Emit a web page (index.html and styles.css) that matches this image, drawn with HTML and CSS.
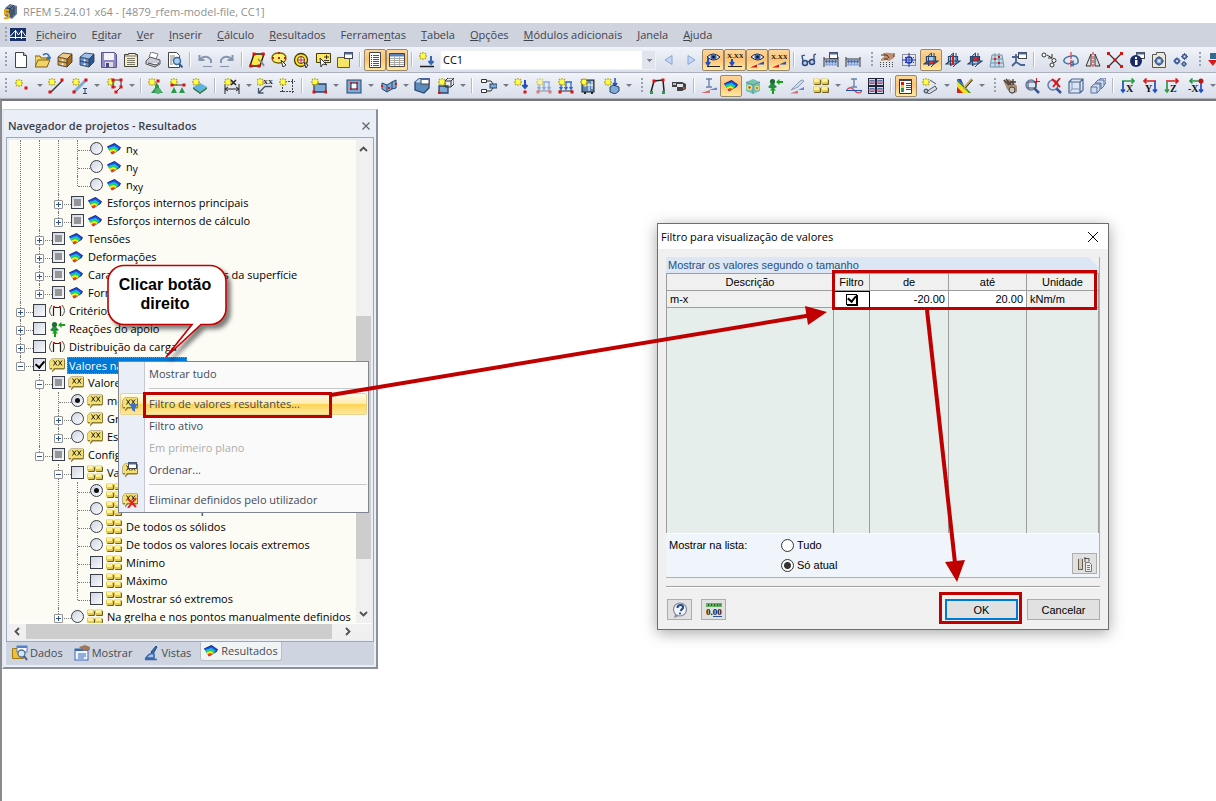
FILE: index.html
```html
<!DOCTYPE html>
<html lang="pt">
<head>
<meta charset="utf-8">
<title>RFEM 5.24.01 x64 - [4879_rfem-model-file, CC1]</title>
<link rel="stylesheet" href="styles.css">
</head>
<body>
<header class="titlebar"><svg data-icon="app"></svg><span>RFEM 5.24.01 x64 - [4879_rfem-model-file, CC1]</span></header>
<nav class="menubar">
  <i class="grip"></i><svg data-icon="bridge"></svg>
  <a href="#"><u>F</u>icheiro</a><a href="#">E<u>d</u>itar</a><a href="#"><u>V</u>er</a><a href="#"><u>I</u>nserir</a><a href="#"><u>C</u>álculo</a><a href="#"><u>R</u>esultados</a><a href="#">Ferrame<u>n</u>tas</a><a href="#"><u>T</u>abela</a><a href="#"><u>O</u>pções</a><a href="#"><u>M</u>ódulos adicionais</a><a href="#"><u>J</u>anela</a><a href="#"><u>A</u>juda</a>
</nav>
<div class="toolbar">
  <span class="tools" data-tools="grip new open cabinet cabinetblue save notebook print preview | undo redo | quad lasso target selectbox window | *list *grid | starload"></span>
  <select class="case" aria-label="Caso de carga"><option>CC1</option></select>
  <span class="tools" data-tools="prev next *eyeload *xxload *eyeres *xxres | glasses abacuswin abacus end hand snap *planexy planexz planeyz guide axes | copy rotate mirror scale info settings gears end flag"></span>
</div>
<div class="toolbar">
  <span class="tools" data-tools="grip node+ line member+ poly+ | nodesup linesup surfsup | dim+ comment region | surface+ opening+ plates+ solid cubes+ | connect+ pload mload1 mload lload sload+ end frame camera | diag *rainbow cube3d support strips tiles+ curve sections | *panel wizard+ colors+ end pan zoomin zoomout box boxes | viewx viewy viewz viewmx+"></span>
</div>
<main class="workspace">
  <section class="navigator" aria-label="Navegador de projetos">
    <header><h2>Navegador de projetos - Resultados</h2><button class="close" aria-label="Fechar"><svg viewBox="0 0 8 8"><path d="M.5.5l7 7m0-7l-7 7"/></svg></button></header>
    <div class="frame">
      <div class="treebox">
        <ul class="tree">
          <li><ul><li><ul><li><ul>
            <li><label class="row"><b></b><input type="radio" name="n"><svg data-icon="rainbow"></svg><span>n<sub>x</sub></span></label></li>
            <li><label class="row"><b></b><input type="radio" name="n"><svg data-icon="rainbow"></svg><span>n<sub>y</sub></span></label></li>
            <li><label class="row"><b></b><input type="radio" name="n"><svg data-icon="rainbow"></svg><span>n<sub>xy</sub></span></label></li>
          </ul></li>
            <li><label class="row"><b class="plus"></b><input type="checkbox" class="mixed"><svg data-icon="rainbow"></svg><span>Esforços internos principais</span></label></li>
            <li><label class="row"><b class="plus"></b><input type="checkbox" class="mixed"><svg data-icon="rainbow"></svg><span>Esforços internos de cálculo</span></label></li>
          </ul></li>
            <li><label class="row"><b class="plus"></b><input type="checkbox" class="mixed"><svg data-icon="rainbow"></svg><span>Tensões</span></label></li>
            <li><label class="row"><b class="plus"></b><input type="checkbox" class="mixed"><svg data-icon="rainbow"></svg><span>Deformações</span></label></li>
            <li><label class="row"><b class="plus"></b><input type="checkbox" class="mixed"><svg data-icon="rainbow"></svg><span>Características geométricas da superfície</span></label></li>
            <li><label class="row"><b class="plus"></b><input type="checkbox" class="mixed"><svg data-icon="rainbow"></svg><span>Formas</span></label></li>
          </ul></li>
          <li><label class="row"><b class="plus"></b><input type="checkbox"><svg data-icon="criteria"></svg><span>Critérios</span></label></li>
          <li><label class="row"><b class="plus"></b><input type="checkbox"><svg data-icon="support"></svg><span>Reações do apoio</span></label></li>
          <li><label class="row"><b class="plus"></b><input type="checkbox"><svg data-icon="criteria"></svg><span>Distribuição da carga</span></label></li>
          <li><label class="row selected"><b class="minus"></b><input type="checkbox" checked><svg data-icon="xx"></svg><span>Valores nas superfícies</span></label>
            <ul>
              <li><label class="row"><b class="minus"></b><input type="checkbox" class="mixed"><svg data-icon="xx"></svg><span>Valores</span></label>
                <ul>
                  <li><label class="row"><b></b><input type="radio" name="v" checked><svg data-icon="xx"></svg><span>m-x</span></label></li>
                  <li><label class="row"><b class="plus"></b><input type="radio" name="v"><svg data-icon="xx"></svg><span>Grupos</span></label></li>
                  <li><label class="row"><b class="plus"></b><input type="radio" name="v"><svg data-icon="xx"></svg><span>Específico</span></label></li>
                </ul></li>
              <li><label class="row"><b class="minus"></b><input type="checkbox" class="mixed"><svg data-icon="xx"></svg><span>Configurações</span></label>
                <ul>
                  <li><label class="row"><b class="minus"></b><input type="checkbox"><svg data-icon="tiles"></svg><span>Valores</span></label>
                    <ul>
                      <li><label class="row"><b></b><input type="radio" name="e" checked><svg data-icon="tiles"></svg><span>Extremos</span></label></li>
                      <li><label class="row"><b></b><input type="radio" name="e"><svg data-icon="tiles"></svg><span>De todas as superfícies</span></label></li>
                      <li><label class="row"><b></b><input type="radio" name="e"><svg data-icon="tiles"></svg><span>De todos os sólidos</span></label></li>
                      <li><label class="row"><b></b><input type="radio" name="e"><svg data-icon="tiles"></svg><span>De todos os valores locais extremos</span></label></li>
                      <li><label class="row"><b></b><input type="checkbox"><svg data-icon="tiles"></svg><span>Mínimo</span></label></li>
                      <li><label class="row"><b></b><input type="checkbox"><svg data-icon="tiles"></svg><span>Máximo</span></label></li>
                      <li><label class="row"><b></b><input type="checkbox"><svg data-icon="tiles"></svg><span>Mostrar só extremos</span></label></li>
                    </ul></li>
                  <li><label class="row"><b class="plus"></b><input type="radio" name="g"><svg data-icon="tiles"></svg><span>Na grelha e nos pontos manualmente definidos</span></label></li>
                </ul></li>
            </ul></li>
        </ul>
      </div>
      <div class="vscroll"><svg viewBox="0 0 9 6"><path d="M1 5l3.500-3.500L8 5"/></svg><i></i><svg viewBox="0 0 9 6"><path d="M1 1l3.500 3.500L8 1"/></svg></div>
      <div class="hscroll"><svg viewBox="0 0 6 9"><path d="M5 1L1.500 4.500 5 8"/></svg><i></i><svg viewBox="0 0 6 9"><path d="M1 1l3.500 3.500L1 8"/></svg></div>
    </div>
    <nav class="tabs">
      <button><svg data-icon="data"></svg>Dados</button><button><svg data-icon="display"></svg>Mostrar</button><button><svg data-icon="views"></svg>Vistas</button><button class="current"><svg data-icon="rainbow"></svg>Resultados</button>
    </nav>
  </section>
</main>

<menu class="context">
  <li><button>Mostrar tudo</button></li>
  <li class="rule"></li>
  <li><button class="hot"><svg data-icon="xxfilter"></svg>Filtro de valores resultantes...</button></li>
  <li><button>Filtro ativo</button></li>
  <li><button disabled>Em primeiro plano</button></li>
  <li><button><svg data-icon="xxsort"></svg>Ordenar...</button></li>
  <li class="rule"></li>
  <li><button><svg data-icon="xxdelete"></svg>Eliminar definidos pelo utilizador</button></li>
</menu>

<section class="dialog" role="dialog" aria-labelledby="dlg">
  <header><h2 id="dlg">Filtro para visualização de valores</h2><button class="close" aria-label="Fechar"><svg viewBox="0 0 10 10"><path d="M0 0l10 10m0-10L0 10"/></svg></button></header>
  <div class="body">
    <fieldset>
      <legend>Mostrar os valores segundo o tamanho</legend>
      <table>
        <colgroup><col><col class="c2"><col class="c3"><col class="c4"><col class="c5"></colgroup>
        <thead><tr><th>Descrição</th><th>Filtro</th><th>de</th><th>até</th><th>Unidade</th></tr></thead>
        <tbody>
          <tr class="data"><td class="fixed">m-x</td><td class="focus"><input type="checkbox" checked aria-label="Filtro"></td><td class="num">-20.00</td><td class="num">20.00</td><td class="fixed">kNm/m</td></tr>
          <tr class="rest"><td></td><td></td><td></td><td></td><td></td></tr>
        </tbody>
      </table>
      <div class="options">
        <span class="caption">Mostrar na lista:</span>
        <div class="radios"><label><input type="radio" name="lista">Tudo</label><label><input type="radio" name="lista" checked>Só atual</label></div>
        <button class="small" aria-label="Copiar"><svg data-icon="copydb"></svg></button>
      </div>
    </fieldset>
    <footer>
      <button class="small" aria-label="Ajuda"><svg data-icon="help"></svg></button>
      <button class="small" aria-label="Unidades"><svg data-icon="units"></svg></button>
      <button class="wide ok">OK</button>
      <button class="wide">Cancelar</button>
    </footer>
  </div>
</section>

<svg class="notes" width="1216" height="801" aria-hidden="true">
  <defs><filter id="sh" x="-20%" y="-20%" width="150%" height="150%"><feDropShadow dx="4" dy="4" stdDeviation="2" flood-color="#000" flood-opacity=".5"/></filter></defs>
  <path filter="url(#sh)" d="M124 265.500H210A16 16 0 0 1 226 281.500V308.500A16 16 0 0 1 210 324.500H201L166 357 192 324.500H124A16 16 0 0 1 108 308.500V281.500A16 16 0 0 1 124 265.500Z" fill="#fff" stroke="#c00000" stroke-width="1.600"/>
  <g fill="none" stroke="#c00000" stroke-width="3"><rect x="144.500" y="393.500" width="186" height="23"/><rect x="833.500" y="271.500" width="262" height="37"/><rect x="940.500" y="593.500" width="80" height="29"/></g>
  <g fill="none" stroke="#c00000" stroke-width="4"><path d="M331 395L809 315.500"/><path d="M927 310L955 563"/></g>
  <g fill="#c00000"><path d="M827 312L805 306 808 325Z"/><path d="M957 582L945 562 965 560Z"/></g>
</svg>
<p class="callout">Clicar botão direito</p>
<script src="icons.js"></script>
</body>
</html>
```
FILE: styles.css
```css
* { box-sizing: border-box; }
body { margin: 0; min-height: 100vh; display: flex; flex-direction: column; overflow: hidden; background: #fff; color: #000; font: 11px/18px "Open Sans", "Noto Sans", sans-serif; }
button { font: inherit; color: inherit; padding: 0; margin: 0; border: 0; background: none; }
h2 { margin: 0; font: inherit; }
ul, menu { list-style: none; margin: 0; padding: 0; }
svg { flex: none; }
svg[data-icon] { width: 16px; height: 16px; }

.titlebar { height: 23px; display: flex; align-items: center; gap: 5px; padding-left: 2px; color: #8f8f8f; }
.menubar { height: 24px; display: flex; align-items: center; gap: 15px; background: #cfd3dd; padding-left: 5px; }
.menubar svg { margin-left: -12px; margin-right: -5px; }
.menubar a { color: #3e4350; text-decoration: none; white-space: nowrap; }
.grip { flex: none; width: 2px; height: 16px; background: repeating-linear-gradient(#9aa0ae 0 2px, transparent 2px 4px); }

.toolbar { height: 26px; display: flex; align-items: center; background: linear-gradient(#f1f4f9, #e4e8f1 50%, #d9deea); border-bottom: 1px solid #aeb2bd; overflow: hidden; }
.tools { display: flex; align-items: center; flex: none; }
.toolbar .grip { margin: 0 3px 0 5px; }
.tools .grip.end { margin-left: 7px; }
.tool { width: 22px; height: 22px; display: flex; align-items: center; justify-content: center; flex: none; }
.tool.split { width: 35px; padding-left: 5px; justify-content: flex-start; }
.tool.split::after { content: ""; margin-left: 6px; border: 3px solid transparent; border-top: 3px solid #777b85; border-bottom: 0; }
.tool.on { background: linear-gradient(#fbd69c, #fdc274 45%, #fee9a0); border: 1px solid #98896c; border-radius: 2px; }
.bar { width: 2px; height: 15px; margin: 0 3px; background: #b4b8c2; border-right: 1px solid #fff; flex: none; }
.case { appearance: none; width: 216px; height: 20px; margin: 0 2px; flex: none; border-radius: 0; padding: 0 2px; font: inherit; color: #000; background: linear-gradient(#7d818c, #7d818c) 206px 8px / 5px 1px no-repeat, linear-gradient(#7d818c, #7d818c) 207px 9px / 3px 1px no-repeat, linear-gradient(#7d818c, #7d818c) 208px 10px / 1px 1px no-repeat, linear-gradient(90deg, #fff 201px, #e0e4ec 201px); border: 1px solid #eef0f5; }

.workspace { flex: 1; border-top: 2px solid #77797e; border-left: 2px solid #8a8c91; padding-top: 8px; }
.navigator { width: 376px; background: #e9eef7; border: 2px solid #8c909a; border-left-color: #e4e8ef; border-top: 1px solid #c9ced8; padding: 0 2px 2px; }
.navigator > header { height: 27px; display: flex; align-items: center; justify-content: space-between; padding: 5px 4px 0 2px; color: #3b3f4b; font-weight: 600; }
.close svg { display: block; width: 8px; height: 8px; fill: none; stroke: #666; stroke-width: 1.300; }
.frame { border: 1px solid #a0a6b4; padding: 2px; display: grid; grid-template: 483px 16px / 1fr 15px; background: #e9eef7; }
.treebox { overflow: hidden; background: #fcfbf4; }
.tree { padding-left: 2px; }
.tree ul { margin-left: 19px; }
.tree li { position: relative; }
.tree li::before { content: ""; position: absolute; left: 9px; top: 0; bottom: 0; border-left: 1px dotted #777; }
.tree li:last-child::before { bottom: auto; height: 10px; }
.row { position: relative; height: 18px; display: flex; align-items: center; white-space: nowrap; }
.row::before { content: ""; position: absolute; left: 10px; width: 12px; top: 10px; border-top: 1px dotted #777; }
.row b { position: relative; flex: none; width: 9px; height: 9px; margin: 2px 8px 0 5px; }
.plus, .minus { border: 1px solid #909399; border-radius: 1px; background: linear-gradient(#35508f, #35508f) center / 5px 1px no-repeat, #fff; }
.plus { background: linear-gradient(#35508f, #35508f) center / 5px 1px no-repeat, linear-gradient(#35508f, #35508f) center / 1px 5px no-repeat, #fff; }
.row input { appearance: none; flex: none; width: 13px; height: 13px; margin: 0 3px 1px 0; border: 1px solid #3a3e47; background: linear-gradient(135deg, #cfd5e2, #fafbfd); display: grid; place-items: center; }
.row input[type=radio] { border-radius: 50%; }
.row input[type=radio]:checked::after { content: ""; width: 5px; height: 5px; border-radius: 50%; background: #111; }
.row input.mixed::after { content: ""; width: 7px; height: 7px; background: #969696; }
.row input[type=checkbox]:checked::after { content: ""; width: 4px; height: 7px; margin-top: -2px; border: solid #000; border-width: 0 2px 2px 0; transform: rotate(40deg); }
.row svg { margin-bottom: 1px; }
.row span { margin-left: 2px; padding: 0 1px 0 2px; }
.row sub { font-size: 10px; line-height: 0; vertical-align: -2px; }
.selected span { background: #0078d7; color: #fff; outline: 1px dotted #e08020; outline-offset: -1px; line-height: 17px; }
.vscroll, .hscroll { display: flex; background: #f0f0f0; align-items: center; }
.vscroll { flex-direction: column; padding: 6px 0; }
.vscroll i { width: 15px; height: 243px; margin: 164px 0 auto; background: #cdcdcd; }
.vscroll svg { width: 9px; height: 6px; }
.hscroll { grid-column: 1 / 3; padding: 0 20px 0 5px; border-top: 1px solid #fff; }
.hscroll i { width: 306px; height: 15px; margin: 0 auto 0 6px; background: #cdcdcd; }
.hscroll svg { width: 6px; height: 9px; }
.vscroll svg, .hscroll svg { fill: none; stroke: #505050; stroke-width: 1.800; }
.tabs { display: flex; height: 23px; background: #cfd5e0; padding-left: 4px; gap: 6px; color: #454a56; }
.tabs button { display: flex; align-items: center; gap: 2px; padding: 0 3px 0 2px; height: 21px; }
.tabs .current { background: #f1f4f4; border: 1px solid #b9c0c4; border-top: 0; border-radius: 0 0 3px 3px; height: 19px; }

.context { position: absolute; left: 118px; top: 361px; width: 251px; padding: 1px; border: 1px solid #808590; background: linear-gradient(90deg, #e9eef7 25px, #c5c8d0 25px 26px, #fafafa 26px); color: #454a56; }
.context button { width: 100%; height: 22px; display: flex; align-items: center; padding-left: 28px; text-align: left; border: 1px solid transparent; }
.context svg { margin: 0 11px 0 -27px; }
.context button:disabled { color: #adadad; }
.context .hot { border-color: #e8d48f; border-radius: 2px; background: linear-gradient(#fffce8, #fdeab0 48%, #fbd556 52%, #fde79a); }
.rule { height: 8px; padding: 3px 0 0 29px; }
.rule::before { content: ""; display: block; height: 1px; background: #c8c8c8; }

.dialog { position: absolute; left: 657px; top: 223px; width: 452px; border: 1px solid #6e6e6e; background: #f0f0f0; box-shadow: 0 3px 14px rgba(0,0,0,.35); font: 11px/16px "Liberation Sans", Arial, sans-serif; }
.dialog > header { height: 25px; padding: 0 10px 0 3px; background: #fff; display: flex; align-items: center; justify-content: space-between; font: 11px/18px "Open Sans", sans-serif; }
.dialog .close svg { width: 10px; height: 10px; stroke: #000; stroke-width: 1; }
.body { padding: 8px 8px 9px; }
fieldset { margin: 0; padding: 0; border: 0; border-right: 1px solid #a9a9e8; border-bottom: 1px solid #a9a9e8; min-width: 0; }
legend { float: left; width: 100%; height: 16px; padding: 0 2px; color: #27507f; background: linear-gradient(225deg, #f0f0f0 7px, #dce6f4 8px); }
.dialog table { clear: both; width: 100%; table-layout: fixed; border-collapse: collapse; background: #e6eeec; }
.c2 { width: 36px; } .c3 { width: 79px; } .c4 { width: 78px; } .c5 { width: 72px; }
th, td { padding: 0 3px; border: 1px solid #9d9d9d; white-space: nowrap; }
th { height: 17px; font-weight: normal; background: #f0f0f0; line-height: 15px; }
.data td { height: 17px; background: #fff; line-height: 15px; }
.data .fixed { background: #f0f0f0; }
.data .num { text-align: right; }
.data .focus { border: 1px solid #000; text-align: center; outline: 1px solid #000; outline-offset: -1px; }
.focus input { appearance: none; display: grid; place-items: center; width: 11px; height: 11px; margin: 0 auto; border: 1px solid #000; box-shadow: 1px 1px 0 #000; }
.focus input::after { content: ""; width: 4px; height: 6px; margin-top: -2px; border: solid #000; border-width: 0 2px 2px 0; transform: rotate(40deg); }
.rest td { height: 226px; border-bottom-color: #fff; }
.options { height: 43px; display: flex; padding: 3px 2px 3px 3px; background: #f0f4fb; }
.caption { width: 112px; }
.radios { flex: 1; display: flex; flex-direction: column; gap: 4px; }
.radios label { display: flex; align-items: center; gap: 3px; height: 16px; }
.radios input { appearance: none; width: 13px; height: 13px; margin: 0; border: 1px solid #333; border-radius: 50%; background: #fff; }
.radios input:checked { background: radial-gradient(circle, #333 3px, #fff 4px); }
.small { width: 25px; height: 21px; display: grid; place-items: center; border: 1px solid #adadad; background: #e1e1e1; }
.options .small { align-self: flex-end; }
.dialog footer { display: flex; gap: 9px; margin-top: 8px; padding: 12px 0 0 1px; border-top: 1px solid #a0a0a0; box-shadow: inset 0 1px #fff; }
.wide { width: 73px; height: 21px; border: 1px solid #adadad; background: #e1e1e1; }
.ok { margin-left: auto; border: 2px solid #0078d7; }

.notes { position: absolute; left: 0; top: 0; pointer-events: none; }
.callout { position: absolute; left: 108px; top: 275px; width: 114px; margin: 0; text-align: center; font: bold 16px/19px "Liberation Sans", Arial, sans-serif; padding: 0 8px; }
```
FILE: icons.js
```js
const p = (d, stroke = "#222", fill = "none", w = 1) => `<path d="${d}" stroke="${stroke}" fill="${fill}" stroke-width="${w}"/>`;
const dash = (d, stroke, pattern) => `<path d="${d}" stroke="${stroke}" fill="none" stroke-dasharray="${pattern}"/>`;
const f = (d, fill) => `<path d="${d}" fill="${fill}"/>`;
const r = (x, y, w, h, fill, stroke = "none") => `<rect x="${x}" y="${y}" width="${w}" height="${h}" fill="${fill}" stroke="${stroke}"/>`;
const c = (x, y, rad, fill, stroke = "none", w = 1) => `<circle cx="${x}" cy="${y}" r="${rad}" fill="${fill}" stroke="${stroke}" stroke-width="${w}"/>`;
const t = (s, x, y, size = 8, fill = "#111") => `<text x="${x}" y="${y}" font-size="${size}" font-family="Liberation Serif" font-weight="bold" fill="${fill}">${s}</text>`;
const dot = (...xy) => xy.map(([x, y]) => r(x - 1.5, y - 1.5, 3, 3, "#e01010")).join("");
const star = (x = 4, y = 4) => p(`M${x} ${y - 4}v8M${x - 4} ${y}h8M${x - 3} ${y - 3}l6 6m0-6l-6 6`, "#b5a60c", "none", 1.3) + c(x, y, 2.4, "#ffff40");
const B = "#7eaad4", D = "#26466f", RED = "#d81818", G = "#2a9a48", BL = "#2050c0";
const win = (x, y) => r(x, y, 8, 6, "#fff", "#444") + r(x, y, 8, 2, "#4668a8");
const cabinet = (a, b, d) => f("M1 5l5-4 9 1-5 5z", a) + f("M1 5l9 2v8l-9-2z", b) + f("M10 7l5-5v8l-5 5z", d) + p("M1 5l9 2v8l-9-2zM1 5l5-4 9 1v8l-5 5M10 7l5-5M1 9l9 2", "#333", "none", .8) + c(5.5, 8.3, 1, "#fff") + c(5.5, 12.3, 1, "#fff");
const bubble = f("M3 1.500h12l1 1v9l-1 1H6l-3 3v-3H1l-.5-1V4z", "#8d7c34") + f("M3 2h12v9H5l-2 3v-3H1V4z", "#f3df72") + p("M4.500 3.500l3.500 5M8 3.500l-3.500 5M9.500 3.500l3.500 5M13 3.500l-3.500 5", "#222");
const eye = p("M2 5q6-6 13 0q-6 6-13 0z", "#222", "#dceaff") + c(8.500, 5, 3, "#3565b8") + c(8.500, 5, 1.300, "#111");
const res = f("M1 15.500l7-3v3z", RED) + f("M8 12.500l7-3v3H8z", BL);
const abac = p("M1 5v10M15 5v10M1 7h14", "#333") + [3, 6, 9, 12].map(x => c(x + .5, 9.500, 1.400, "#4468a8") + c(x + .5, 12.500, 1.400, "#89a8d8")).join("");
const plane = (flat, upright) => p("M5.500 3.500l3-2.500v10l-3 3z", D, "#a9cbee") + p("M3.500 4.500h9v6h-9z", D, upright, 1.200) + p("M1 12l4-3h10l-4 3z", D, flat, 1.200) + p("M11 1v11l-3 3", D) + p("M5.500 4.500v9", D);
const lens = c(7, 7, 5, "#d5e5fa", "#667ca8", 1.500) + p("M10.500 10.500L15 15", "#3555a0", "none", 2.500);
const loads = col => p("M2 4h12M3 4v7M8 4v7M13 4v7M1.500 9L3 11.500 4.500 9M6.500 9L8 11.500 9.500 9M11.500 9l1.500 2.500L14.500 9", col, "none", 1.300) + p("M1 13h14", "#333") + dot([2, 14], [14, 14]);
const axis = (s, h, v, left) => p(left ? "M14 3H2M4.500.5L2 3l2.500 2.500" : "M2 3h12M11.500.5L14 3l-2.500 2.500", h, "none", 1.700) + p(left ? "M13 3v11M11 11.500l2 2.500 2-2.500" : "M3 3v11M1 11.500L3 14l2-2.500", v, "none", 1.700) + t(s, left ? (s.length > 1 ? 0 : 3) : 6, 14, 10);
const gear = (x, y, s) => c(x, y, s, "#7f9ed0", "#3c5c96", 1.500) + p(`M${x} ${y - s - 1.500}v${2 * s + 3}M${x - s - 1.500} ${y}h${2 * s + 3}`, "#3c5c96") + c(x, y, s / 2, "#e6edf8");
const tile = (x, y) => `<rect x="${x + 1}" y="${y + 1}" width="7" height="5.500" rx="1" fill="#6f6228"/><rect x="${x}" y="${y}" width="7" height="5.500" rx="1" fill="#e3c854"/><rect x="${x + 1}" y="${y + .5}" width="5" height="3" fill="#fff09a"/>`;
const ibeam = (x, col) => p(`M${x} 1h6M${x} 9h6M${x + 3} 1v8`, col, "none", 1.400);

const icons = {
  app: f("M3 4l5-4 7 2v8l-5 5-7-3z", "#5f7899") + p("M5 4l3 1v8M8 5l4-4M10 5v8M12 3v8", "#24344e") + p("M7 6H3v4q4-2 4 2 0 3-5 2", "#e8a818", "none", 2),
  bridge: r(0, 1, 16, 13, "#19306a") + p("M0 10.500h16M5.500 3v9M11.500 3v9", "#fff") + p("M0 9.500l5.500-6 3 4.500 3-4.500 4.500 6", "#fff"),
  new: p("M2.500.5h8l3 3v12h-11z", "#444", "#fff") + p("M10.500.5v3h3", "#444", "#ccc"),
  open: f("M0 4h5l1 2h7v9H0z", "#d6a830") + p("M0 15l3-7h12l-3 7zM0 15V4h5l1 2h6v2", "#7c6118", "#f2d364") + p("M8 3q4-3 6 1v3M12 5l2 2 2-2", "#3c70b0", "none", 1.600),
  cabinet: cabinet("#efca88", "#d9a04a", "#a06a20"),
  cabinetblue: cabinet("#9cc0ec", "#5a8ad4", "#2d5596"),
  save: p("M.5.5h13l2 2v13H.5z", "#5c5494", "#8f87c8") + r(3, 1, 10, 7, "#f4f4f8") + r(4, 10, 8, 5, "#ddd") + r(5, 11, 3, 4, "#4a4488"),
  notebook: p("M1.500 2.500h4v-1h7v1h2v12h-13z", "#443", "#f6ecd2") + p("M4 6.500h8M4 8.500h8M4 10.500h8M4 12.500h8M2 4h12", "#776"),
  print: p("M4 5l2-5 7 2-2 5", "#777", "#fff") + p("M1 9l4-4 10 3v4l-5 3-9-3z", "#555", "#c9ccd8") + p("M3 11l8 2 3-2", "#444", "#fff"),
  preview: p("M1.500.5h8l3 3v12h-11z", "#444", "#fff") + p("M3 4h5M3 6h5M3 8h3M3 10h2M3 12h3", "#888") + c(10, 9, 3.500, "#a8d0f0", "#3d6aa0", 1.500) + p("M12.500 12l3 3.500", "#3d5a90", "none", 2),
  undo: p("M3 7q7-5 11 1v3M2.500 3v5h5", "#8695ae", "none", 2) + p("M6 14.500h9", "#8695ae"),
  redo: p("M13 7Q6 2 2 8v3M13.500 3v5h-5", "#8695ae", "none", 2) + p("M1 14.500h9", "#8695ae"),
  quad: p("M5 2h10l-4 12H1z", "#222", "#ffe84a", 1.400) + dot([5, 2], [14, 2], [2, 14], [10, 14]) + p("M9 7l6 6M12 9l3 5", "#888", "none", 1.600),
  lasso: p("M1 6q0-5 7-5t7 5-7 5-7-5z", "#776600", "#ffef70", 1.300) + r(7, 0, 2, 2, RED) + r(1, 5, 2, 2, RED) + r(13, 5, 2, 2, RED) + r(7, 5, 2, 2, RED) + p("M10 8l2 7 3-2z", "#333", "#fff"),
  target: c(8, 8, 6.500, "#ffe52e", "#443c00", 1.300) + c(8, 8, 3.500, "#fff", "#443c00") + p("M8 4v8M4 8h8", RED) + p("M11 10l2 6 2-3z", "#333", "#ddd"),
  selectbox: p("M1.500 1.500h14v9h-14z", "#443c00", "#ffe95a") + p("M11.500 3v4M9 5h5M9 8.500h5", "#333") + p("M5 6l1 9 2-3 4 1z", "#333", "#fff"),
  window: p("M.5 5.500h12v10H.5z", "#665c20", "#f6e468") + win(7.5, .5),
  list: p("M2.500.5h11v15h-11z", "#444", "#fff") + p("M6 3.500h6M6 5.500h6M6 7.500h6M6 9.500h6M6 11.500h6M6 13.500h6", "#555") + dash("M4.500 3v11", "#333", "1 1"),
  grid: p("M.5 1.500h15v13H.5z", "#444", "#fff") + r(1, 2, 14, 2.500, "#5a80bc") + p("M1 6.500h14M1 8.500h14M1 10.500h14M1 12.500h14M5.500 5v9M10.500 5v9", "#aaa"),
  starload: star() + p("M12 4v8M9.500 9l2.500 3 2.500-3", "#3565b8", "none", 2) + p("M1 14.500h14", "#222", "none", 1.500),
  prev: p("M11 3.500v9L4 8z", "#8ba6d8", "#c4d6f4"), next: p("M5 3.500v9L12 8z", "#8ba6d8", "#c4d6f4"),
  eyeload: eye + p("M3 6v7M1 10l2 3 2-3", BL, "none", 2) + p("M2 14.500h13", "#222"),
  xxload: t("X.XX", 0, 6, 7) + p("M5 7v6M3 10l2 3 2-3", BL, "none", 2) + p("M1 14.500h14", "#222"),
  eyeres: eye + res, xxres: t("X.XX", 0, 7, 7) + res,
  glasses: c(4, 11, 2.500, "#b8cdec", "#30487a", 1.500) + c(11, 10, 2.500, "#b8cdec", "#30487a", 1.500) + p("M2 9L1 4l3-1M13 8V3l2-1M6 10l3-1", "#30487a", "none", 1.300),
  abacus: abac, abacuswin: abac + win(6.5, .5),
  hand: f("M4 1q7-1 11 1v4l-5 3-3-1-5 1V7l3-2z", "#c09070") + p("M2 3h6l2 3M5 7h4M15 1v4", "#4a3326") + dash("M1 10.500h14M1 12.500h14M1 14.500h14", "#444", "1 2"),
  snap: dash("M1.500 2.500h13v11h-13zM4 5.500h9M4 10.500h9", "#334", "1 1") + c(8, 8, 3, "none", "#1c38b0", 1.500) + p("M8 1v14M1 8h14", "#1c38b0"),
  planexy: plane("#e03030", "#a9cbee"), planexz: plane("#a9cbee", "#a9cbee") + p("M8 3v10", RED, "none", 2), planeyz: plane("#a9cbee", "#e02020"),
  guide: p("M3 3h10l2 12H1zM2 7h12M2 11h12M6 1v14M10 1v14", "#7193aa", "#c8dcea") + r(5, 6, 2, 2, RED) + r(9, 4, 2, 2, RED) + r(9, 10, 2, 2, RED),
  axes: p("M1 14l4-4 5 3h4M5 10V2M1 5h7", "#456495", "none", 1.800) + win(7.5, .5),
  copy: c(3, 3, 2, "#fff", "#333") + c(13, 8.500, 2, "#fff", "#333") + c(11, 13, 2, "#fff", "#333") + p("M6 3l5 3M11 2v4H7", "#333"),
  rotate: p("M6 12Q0 11 1 8t7-4 7 4-5 4M10 9.500v4l-3-2z", "#4374a8", "none", 1.500) + dash("M8 0v16", RED, "3 1"),
  mirror: p("M6 2v12H1zM10 2v12h5z", "#333", "#ddd") + dash("M8 0v16", RED, "3 1"),
  scale: p("M2 2l12 12M14 2L2 14", "#333", "none", 1.300) + dot([1.5, 1.5], [14.5, 1.5], [1.5, 14.5], [14.5, 14.5], [8, 8]),
  info: win(7.5, .5) + c(7, 9, 6, "#182868") + r(6, 8, 2.500, 5, "#fff") + c(7, 6, 1.200, "#fff"),
  settings: p("M1.500 2.500h4v-2h8v2h1v13h-13z", "#555", "#efe8d8") + gear(8, 9, 3.500),
  gears: gear(4, 9, 2.200) + gear(11.5, 4.5, 2) + gear(11, 12, 1.600),
  flag: f("M3 1h13v6H3z", "#336b90") + f("M1 8h9l-4 6z", RED),
  node: star(4, 5) + dot([11, 10]), line: star() + p("M3 14L14 3", "#333", "none", 1.400) + dot([2, 14], [14, 2]),
  member: star() + p("M2 14L14 2", B, "none", 3) + dot([2, 14], [14, 2]) + p("M11 10.500h4M11 15.500h4M13 10v5", D),
  poly: star() + p("M6 2h8v7l-5 5M6 2v7h3", "#333") + dot([6, 2], [14, 2], [14, 9], [9, 14], [6, 9]),
  nodesup: f("M8 4l3 4v2l4 5H3l4-5V8z", G) + c(10, 13, 3, "#52b070") + dot([10, 3]) + star(),
  linesup: star() + p("M1 7h14", "#333") + dot([2, 7], [14, 7]) + f("M4 9l3 6H1zM12 9l3 6H9z", G),
  surfsup: f("M1 9l7-4 7 4-7 5z", "#5ab4e4") + f("M1 11l7 5 7-5v-2l-7 5-7-5z", "#367a45") + star(),
  dim: p("M1 6v10M15 6v10M1 11h14M4 9l-3 2 3 2M12 9l3 2-3 2", "#222") + star() + p("M7 2l5 5M12 2L7 7", "#222", "none", 1.500),
  comment: star(3, 4) + t("XX", 6, 6, 7) + p("M15 8.500H8l-6 6M1.500 10v5h5", "#456", "none", 1.300),
  region: dash("M3.500 3v12M13.500 1v14M3 3.500h13M1 13.500h14", "#444", "2 1") + star(),
  surface: p("M3 6h12v8H3z", D, B, 1.300) + dot([3, 14], [15, 14]) + star(),
  opening: r(1, 2, 14, 13, B, D) + r(5, 5, 6, 6, "#f6f8ff", "#223") + [[5, 5], [11, 5], [5, 11], [11, 11]].map(([x, y]) => r(x - 1, y - 1, 2, 2, RED)).join(""),
  plates: p("M1 5l5 2v7l-5-3zM6 7l5-3v7l-5 3M11 4l4-2v8l-4 1", D, B) + r(0, 7, 2, 2, RED) + r(7, 9, 2, 2, RED) + r(14, 5, 2, 2, RED),
  solid: p("M1 4l4-3h10v9l-5 5-9-3z", D, "#5d8cbc", 1.300) + f("M1 4l4-3h10l-5 4z", "#c5daf0") + win(7, 0),
  cubes: p("M1 8h9v7H1z", D, B, 1.300) + p("M7 3h6v6H7zM7 3l3-3h6v6l-3 3M13 3l3-3", "#333") + star() + dot([1, 15]),
  connect: p("M.5 1.500h5v3h-5zM.5 11.500h5v3h-5z", "#333", "#fff") + p("M6 3h4l2 3M6 13h4l2-3", "#333") + r(9, 6, 7, 4, B, D),
  pload: star() + p("M11 2v8M8.500 7l2.500 3 2.500-3", BL, "none", 2) + dot([11, 14]),
  mload1: `<g opacity=".5">${loads("#3468c8") + star()}</g>`, mload: loads("#3468c8") + star(),
  lload: r(2, 2, 12, 12, "#5d86b4", "#222") + p("M5 3v6M9 5v8M12 3v8M3 7h10", "#fff") + p("M5 14v2M12 14v2", "#222", "none", 2) + star(),
  sload: star() + p("M11 0v7M9 5l2 3 2-3", BL, "none", 1.500) + p("M6 9l3-2 6 2v4l-4 3-5-2z", D, B),
  frame: p("M2 14L5 3l9-1 1 11", "#222", "none", 1.500) + dot([5, 3], [14, 2]) + r(1, 13, 3, 3, G) + r(13, 13, 3, 3, G),
  camera: f("M1 4h10l4 2v5l-4 2H6V9H1z", "#3f4348") + r(6, 6, 6, 3, "#e4e4e4") + r(2, 5, 3, 2, "#bbb") + c(13, 10, 1.200, "#b05030"),
  diag: ibeam(5, "#6a84ac") + f("M0 15l9-3v3z", "#d87070") + f("M9 11.500l7-2v2.500H9z", "#7080d0"),
  rainbow: f("M1 5.500L8.500 2l6.500 4.500-1.500 2.500L6 13.500z", "#142070") + f("M1.500 6L8.500 3l5.500 3.500-1 1.500-2.500-1.500L2 7z", "#2050f0") + f("M2 7l6.500-2 4.500 3-2 1.500L3 8.500z", "#10c0f0") + f("M2.500 8l5.500-1.500 4 2.500-2 1.500L4 10z", "#20d850") + f("M3.500 9.500L7.500 8l3.500 2-3 2-4-1z", "#f4ee20") + f("M4.500 11l3-1 2 1-3.500 2.200z", "#f04018"),
  cube3d: f("M1 4l7-3 7 3v9l-7 3-7-3z", "#75c4b4") + p("M1 4l7 3 7-3M8 7v9", "#6a90a0") + c(4.5, 9.5, 2.800, "#e8e860") + c(4.5, 9.5, 1.300, "#e04030") + c(12, 10, 2.200, "#e8e860") + c(12, 10, 1, "#e04030"),
  support: f("M5 3l3 4 2 2q-5 3-9 0l2-2z", "#2b8a44") + c(5.5, 3.5, 2.600, "#1f6c38") + f("M9 4l3.500-3v2H16v2h-3.500v2z", "#18a018") + f("M6 9l3 3.500H7V16H5v-3.500H3z", "#18a018"),
  strips: p("M2 12L11 3q3-2 4 0L9 9z", "#889ab4", "#cfdcec") + f("M1 15.500l8-3v3z", "#d87070") + f("M9 12l6-3v3z", "#7080d0"),
  tiles: tile(0, .5) + tile(8, .5) + tile(0, 8.500) + tile(8, 8.500),
  curve: ibeam(5, "#6a84ac") + p("M0 13q4-6 8-1t8 1", "#d85050", "none", 1.300) + p("M0 12.500h16", BL),
  sections: [[.5, .5], [8.500, .5], [.5, 8.500], [8.500, 8.500]].map(([x, y]) => r(x, y, 7, 7, "#cdddf2", "#223") + p(`M${x + 1} ${y + 2}h5M${x + 1} ${y + 5}h5`, "#4f72a8") + p(`M${x} ${y + 3.500}h7`, "#c03050")).join(""),
  panel: p("M1.500 1.500h12v14h-12z", "#333", "#fff") + r(1, 1, 13, 2, "#444") + r(3, 4, 3, 3, RED) + r(3, 7, 3, 3, "#e8d020") + r(3, 10, 3, 4, G) + p("M8 5.500h5M8 7.500h5M8 9.500h5M8 11.500h5", "#446"),
  wizard: star() + p("M8 2l6 4M4 14l9-6 2 3-8 5z", "#456", "#d8dce4") + c(4, 13, 2, "#a9b8cc", "#345"),
  colors: f("M0 1l14 14H0z", "#209030") + f("M0 3l12 12H0z", "#f0e020") + f("M0 9l6 6H0z", "#d82020") + f("M0 1h4l3 7z", "#2448c8") + p("M15 1L9 8l-2 3", "#c8a050", "none", 2.500) + p("M15.500 2l-7 8", "#332c20"),
  pan: f("M1 2l4 1 1-2 3 1 6 6v6l-5 2-5-5z", "#a98a74") + p("M2 2l5 5M4 1l5 6M11 1v6M8 4h6", "#443a34", "none", 1.300) + c(10, 12, 3, "#c4c4b8", "#444"),
  zoomin: lens + p("M4 4h8v6H4z", "#444") + p("M12.500 0v6M10 3.500h6", RED), zoomout: lens + p("M6 1l8 8M14 0L7 9", RED, "none", 1.800),
  box: p("M1 4l3-3h11v11l-3 3H1zM1 4h11v11M12 4l3-3", "#4d6590", "#dbe5f4", 1.200) + p("M4 4v7h8M4 11l-3 4", "#7f93b8"),
  boxes: p("M1 9h6v6H1zM1 9l3-3h6v6l-3 3M5 5h6v6M5 5l3-3h6v6l-3 3M9 2l2-2h5v5l-2 2", "#59719c", "#d0dcf0"),
  viewx: axis("X", G, BL), viewy: axis("Y", RED, BL, true), viewz: axis("Z", RED, G), viewmx: axis("-X", G, BL, true) + c(13, 3, 2.500, "#c01818"),
  criteria: p("M4.500 13V4.500h7V13", "#222", "none", 1.200) + p("M3 2q-5 6 0 11M13 2q5 6 0 11", "#555") + r(4, 3, 2, 2, RED) + r(10, 3, 2, 2, RED),
  xx: bubble,
  xxfilter: bubble + f("M7 8h9l-3 4v4l-3-2v-2z", "#3a70d0"),
  xxsort: bubble + win(6.5, .5), xxdelete: bubble + p("M6 7l8 8M14 6L6 16", "#e02020", "none", 2),
  data: p("M.5 3.500h5l1 2h5v8H.5z", "#a07810", "#f0c030") + r(5, 1, 10, 6, "#fff", "#5080c8") + r(5, 1, 10, 2, "#5080c8") + c(9.500, 8.500, 3.500, "#cfe5fa", "#57708c", 1.300) + p("M12 11l3 4", "#45588a", "none", 2),
  display: r(1, 4, 13, 11, "#eef4ff", "#3866b8") + r(1, 4, 13, 2, "#3866b8") + p("M4 9h8M4 11h8M4 13h6", "#3866b8") + f("M5 2l6-2 5 2v3l-6 1z", "#a07858"),
  views: p("M8 7l5-6 1 1-4 7z", "#24488c", "#3868b0") + p("M2 14.500h12M3 13q4-6 8-4v4z", "#3868b0", "#a8c4ec", 1.600),
  copydb: r(1, 3, 5, 11, "#665f50") + r(2, 2, 3, 11, "#d2cbb8") + p("M7 2.500h5v3M8 1v5", "#555") + p("M8.500 6.500h4l2 2v7h-6zM10 9.500h3M10 11.500h3M10 13.500h3", "#777", "#eee"),
  help: f("M3 12l-1 4 5-2z", "#8494a8") + c(8, 7.500, 6.500, "#eef4fa", "#889", 1.200) + p("M5.500 6q0-3 3-3 3 0 2.500 3-1 1-2.500 3", "#24488c", "none", 2) + c(8, 11.500, 1.100, "#24488c"),
  units: r(0, 1, 16, 4, "#64b060") + p("M2.500 2v2M5.500 2v2M8.500 2v2M11.500 2v2M14 2v2", "#286028") + t("0.00", 0, 13, 9) + p("M7 14.500h9", "#3050a0")
};

const draw = (svg, name) => { svg.setAttribute("viewBox", "0 0 16 16"); svg.innerHTML = icons[name]; };
document.querySelectorAll(".tools").forEach(group => {
  group.dataset.tools.split(" ").forEach(word => {
    const el = document.createElement(word === "|" || word === "grip" || word === "end" ? "i" : "button");
    if (word === "|") el.className = "bar";
    else if (el.tagName === "I") el.className = "grip " + word;
    else {
      const name = word.replace(/[*+]/g, "");
      el.className = "tool" + (word[0] === "*" ? " on" : "") + (word.endsWith("+") ? " split" : "");
      el.setAttribute("aria-label", name);
      el.innerHTML = `<svg data-icon="${name}"></svg>`;
    }
    group.append(el);
  });
});
document.querySelectorAll("svg[data-icon]").forEach(svg => draw(svg, svg.dataset.icon));
```
